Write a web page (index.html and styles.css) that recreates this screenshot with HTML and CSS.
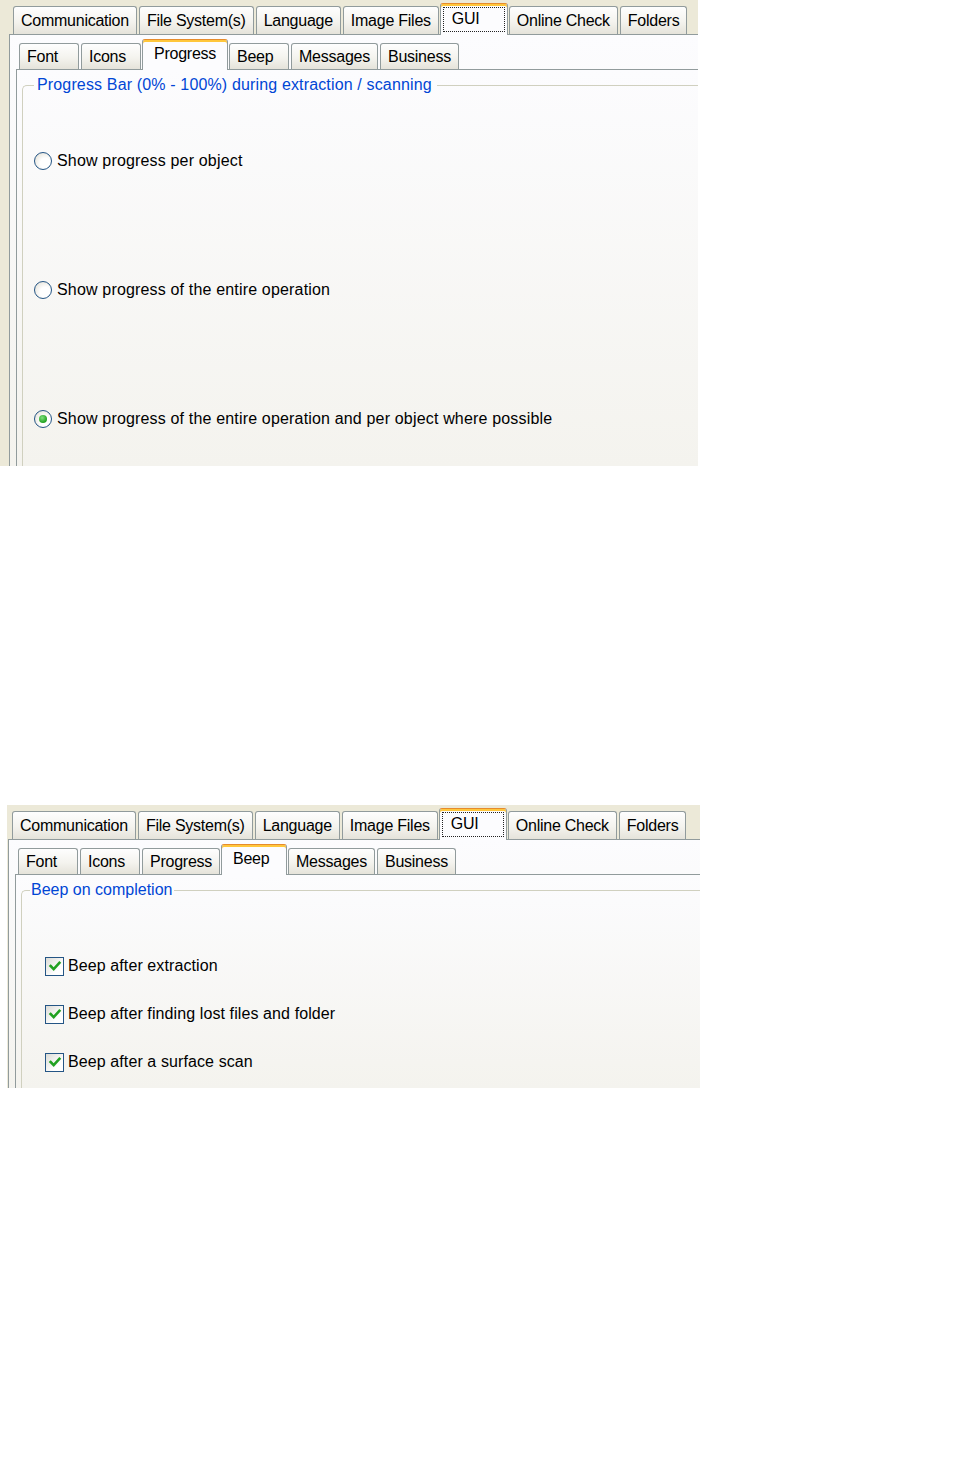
FILE: index.html
```html
<!DOCTYPE html>
<html lang="en">
<head>
    <meta charset="UTF-8">
    <meta name="viewport" content="width=device-width, initial-scale=1.0">
    <title>Options - GUI</title>
    <link rel="stylesheet" href="styles.css">
</head>
<body>
    <!-- GUI > Progress -->
    <div class="shot shot-progress">
        <div class="tabs tabs-outer">
            <span class="tab">Communication</span>
            <span class="tab">File System(s)</span>
            <span class="tab">Language</span>
            <span class="tab">Image Files</span>
            <span class="tab active focused"><span class="focus">GUI</span></span>
            <span class="tab">Online Check</span>
            <span class="tab">Folders</span>
        </div>
        <div class="page page-outer">
            <div class="tabs tabs-inner">
                <span class="tab">Font</span>
                <span class="tab">Icons</span>
                <span class="tab active">Progress</span>
                <span class="tab">Beep</span>
                <span class="tab">Messages</span>
                <span class="tab">Business</span>
            </div>
            <div class="page page-inner">
                <fieldset class="group group-progress">
                    <legend>Progress Bar (0% - 100%) during extraction / scanning</legend>
                    <div class="options radio-list">
                        <label class="option"><span class="radio"></span>Show progress per object</label>
                        <label class="option"><span class="radio"></span>Show progress of the entire operation</label>
                        <label class="option"><span class="radio checked"></span>Show progress of the entire operation and per object where possible</label>
                    </div>
                </fieldset>
            </div>
        </div>
    </div>

    <!-- GUI > Beep -->
    <div class="shot shot-beep">
        <div class="tabs tabs-outer">
            <span class="tab">Communication</span>
            <span class="tab">File System(s)</span>
            <span class="tab">Language</span>
            <span class="tab">Image Files</span>
            <span class="tab active focused"><span class="focus">GUI</span></span>
            <span class="tab">Online Check</span>
            <span class="tab">Folders</span>
        </div>
        <div class="page page-outer">
            <div class="tabs tabs-inner">
                <span class="tab">Font</span>
                <span class="tab">Icons</span>
                <span class="tab">Progress</span>
                <span class="tab active">Beep</span>
                <span class="tab">Messages</span>
                <span class="tab">Business</span>
            </div>
            <div class="page page-inner">
                <fieldset class="group group-beep">
                    <legend>Beep on completion</legend>
                    <div class="options check-list">
                        <label class="option">
                            <span class="check"><svg viewBox="0 0 16 16" width="14" height="14"><polyline points="3,8 6.5,11.5 13,4.5" /></svg></span>
                            Beep after extraction
                        </label>
                        <label class="option">
                            <span class="check"><svg viewBox="0 0 16 16" width="14" height="14"><polyline points="3,8 6.5,11.5 13,4.5" /></svg></span>
                            Beep after finding lost files and folder
                        </label>
                        <label class="option">
                            <span class="check"><svg viewBox="0 0 16 16" width="14" height="14"><polyline points="3,8 6.5,11.5 13,4.5" /></svg></span>
                            Beep after a surface scan
                        </label>
                    </div>
                </fieldset>
            </div>
        </div>
    </div>
</body>
</html>
```

FILE: styles.css
```css
* {
    margin: 0;
    padding: 0;
    box-sizing: border-box;
}
body {
    background-color: #fff;
    font-family: 'Liberation Sans', Arial, sans-serif;
    font-size: 16px;
    color: #000;
}
.shot {
    display: flex;
    flex-direction: column;
    background-color: #ece9d8;
    overflow: hidden;
}
.shot-progress {
    width: 698px;
    height: 466px;
    padding-left: 9px;
}
.shot-beep {
    width: 693px;
    height: 283px;
    margin: 339px 0 0 7px;
    padding-left: 1px;
}

/* tab strips */
.tabs {
    display: flex;
    align-items: flex-end;
    gap: 2px;
    height: 34px;
    flex-shrink: 0;
    letter-spacing: -0.25px;
}
.tabs-outer {
    padding-left: 4px;
}
.tabs-inner {
    padding-left: 3px;
}
.tab {
    display: flex;
    align-items: center;
    height: 28px;
    min-width: 60px;
    padding: 0 7px;
    border: 1px solid #919b9c;
    border-bottom: none;
    border-radius: 3px 3px 0 0;
    background: linear-gradient(#fefefe, #f4f3ee 55%, #e5e3da);
    white-space: nowrap;
}
.tabs-inner .tab {
    height: 26px;
}
.tab.active {
    position: relative;
    z-index: 1;
    height: 32px;
    min-width: 66px;
    margin: 0 -1px -1px;
    padding: 0 11px 3px;
    border-top-color: #e68b2c;
    background: #fcfcfe;
    box-shadow: inset 0 2px #ffc73c;
}
.tabs-inner .tab.active {
    height: 31px;
}
.tab.focused {
    min-width: 68px;
    padding: 3px 2px 3px;
}
.focus {
    display: flex;
    align-items: center;
    width: 100%;
    height: 100%;
    padding: 0 8px 2px;
    border: 1px dotted #222;
}

/* tab pages */
.page {
    flex: 1;
    display: flex;
    flex-direction: column;
    border-left: 1px solid #919b9c;
    border-top: 1px solid #919b9c;
    background: linear-gradient(#fcfcfe, #f4f3ee);
}
.page-outer {
    padding-left: 6px;
}
.page-inner {
    padding: 6px 0 0 5px;
}

/* group box */
.group {
    flex: 1;
    min-width: 0;
    border: none;
    border-top: 1px solid #d0d0bf;
    border-left: 1px solid #d0d0bf;
    border-top-left-radius: 5px;
}
.group legend {
    color: #0046d5;
    line-height: 18px;
}
.group-progress legend {
    margin-left: 11px;
    padding: 0 5px 0 3px;
    letter-spacing: 0.15px;
}
.group-beep legend {
    margin-left: 8px;
    padding: 0 2px 0 1px;
}
.options {
    display: flex;
    flex-direction: column;
}
.radio-list {
    padding: 57px 0 0 11px;
    gap: 109px;
}
.check-list {
    padding: 57px 0 0 23px;
    gap: 28px;
}
.option {
    display: flex;
    align-items: center;
    height: 20px;
    gap: 5px;
}
.radio-list .option {
    letter-spacing: 0.17px;
}
.check-list .option {
    gap: 4px;
    letter-spacing: 0.1px;
}

/* radio buttons and check boxes */
.radio {
    display: flex;
    align-items: center;
    justify-content: center;
    width: 18px;
    height: 18px;
    border-radius: 50%;
    border: 1px solid #245585;
    background: radial-gradient(circle at 65% 65%, #fff 0 35%, #dedbcf 100%);
}
.radio.checked::after {
    content: "";
    width: 8px;
    height: 8px;
    border-radius: 50%;
    background: radial-gradient(circle at 40% 35%, #7ee07e, #21a121 70%);
}
.check {
    display: flex;
    align-items: center;
    justify-content: center;
    width: 19px;
    height: 19px;
    border: 1px solid #245585;
    background: linear-gradient(135deg, #dcdcd6, #fff 70%);
}
.check polyline {
    fill: none;
    stroke: #21a121;
    stroke-width: 3;
    stroke-linecap: square;
}
```
